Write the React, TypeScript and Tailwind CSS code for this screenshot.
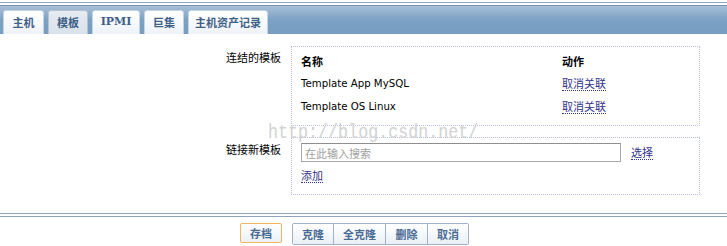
import React from 'react';

const cjk = { fontFamily: '"Noto Sans CJK SC", "DejaVu Sans", sans-serif' };
const latin = { fontFamily: '"DejaVu Sans", "Noto Sans CJK SC", sans-serif' };

const tabs = [
  { label: '主机', w: 'w-[41px]' },
  { label: '模板', w: 'w-[40px]', active: true },
  { label: 'IPMI', w: 'w-[48px]' },
  { label: '巨集', w: 'w-[40px]' },
  { label: '主机资产记录', w: 'w-[80px]' },
];

const linked = ['Template App MySQL', 'Template OS Linux'];

function Link({ children }: { children: React.ReactNode }) {
  return (
    <a className="text-[#33338a] text-[11px] leading-[14px] border-b border-dotted border-[#33338a] cursor-pointer" style={cjk}>
      {children}
    </a>
  );
}

function Btn({ children, className = '' }: { children: React.ReactNode; className?: string }) {
  return (
    <button
      className={`h-[20px] flex items-center justify-center text-[11px] font-bold text-[#4a6b94] bg-gradient-to-b from-[#ffffff] to-[#eaf0f6] ${className}`}
      style={cjk}
    >
      {children}
    </button>
  );
}

export default function App() {
  return (
    <div className="w-[727px] h-[246px] bg-white relative overflow-hidden">
      {/* header */}
      <div className="h-[2px]" />
      <div className="h-px bg-[#8ba4bf]" />
      <div className="h-[2px]" />
      <div className="h-[29px] border-t border-[#7892b0] bg-gradient-to-b from-[#a8bfd7] via-[#7ba1c4] to-[#779dc1] flex items-end pl-[3px] gap-[4px]">
        {tabs.map((t) => (
          <div
            key={t.label}
            className={`${t.w} h-[24px] rounded-t-[3px] border border-b-0 flex items-center justify-center text-[11px] font-bold text-[#3f5f88] ${
              t.active
                ? 'bg-gradient-to-b from-[#e6ebf1] to-[#d9e1ea] border-[#b4c3d4]'
                : 'bg-gradient-to-b from-[#ffffff] to-[#eef3f8] border-[#c6d3e1]'
            }`}
            style={t.label === 'IPMI' ? { fontFamily: '"DejaVu Serif", serif' } : cjk}
          >
            {t.label}
          </div>
        ))}
      </div>

      {/* form */}
      <div className="pt-[12px] flex flex-col gap-[11px]">
        <div className="flex">
          <div className="w-[281px] text-right text-[11px] leading-[14px] text-black pt-[4px]" style={cjk}>
            连结的模板
          </div>
          <div className="ml-[10px] w-[409px] h-[80px] border border-dotted border-[#b9c0dd] pl-[9px] pt-[3px]">
            <div className="flex h-[22px] items-center text-[11px] font-bold text-black" style={cjk}>
              <div className="w-[261px]">名称</div>
              <div>动作</div>
            </div>
            {linked.map((name) => (
              <div key={name} className="flex h-[23px] items-center">
                <div className="w-[261px] text-[10.2px] text-black" style={latin}>
                  {name}
                </div>
                <div className="flex">
                  <Link>取消关联</Link>
                </div>
              </div>
            ))}
          </div>
        </div>

        <div className="flex">
          <div className="w-[281px] text-right text-[11px] leading-[14px] text-black pt-[5px]" style={cjk}>
            链接新模板
          </div>
          <div className="ml-[10px] w-[409px] h-[58px] border border-dotted border-[#b9c0dd] pl-[9px] pt-[5px]">
            <div className="flex items-center gap-[10px]">
              <input
                className="w-[320px] h-[19px] border border-[#a9a9a9] border-t-[#8f8f8f] px-[3px] text-[11px] outline-none placeholder:text-[#a0a0a0]"
                style={cjk}
                placeholder="在此输入搜索"
              />
              <Link>选择</Link>
            </div>
            <div className="mt-[6px] flex leading-[14px]">
              <Link>添加</Link>
            </div>
          </div>
        </div>
      </div>

      {/* footer */}
      <div className="mt-[18px] h-px bg-[#8ea3bc]" />
      <div className="mt-[2px] h-px bg-[#8ea3bc]" />
      <div className="mt-[6px] flex pl-[240px]">
        <Btn className="w-[42px] border border-[#f5b45e] rounded-[2px]">存档</Btn>
        <div className="ml-[10px] flex border border-[#9fb2c9] rounded-[2px]">
          <Btn className="w-[41px] border-r border-[#9fb2c9]">克隆</Btn>
          <Btn className="w-[52px] border-r border-[#9fb2c9]">全克隆</Btn>
          <Btn className="w-[42px] border-r border-[#9fb2c9]">删除</Btn>
          <Btn className="w-[40px]">取消</Btn>
        </div>
      </div>

      {/* watermark */}
      <div
        className="absolute left-[268px] top-[117px] text-[16.7px] text-[#d2d2d2] pointer-events-none select-none origin-top scale-y-125"
        style={{ fontFamily: '"Liberation Mono", monospace' }}
      >
        http://blog.csdn.net/
      </div>
    </div>
  );
}
